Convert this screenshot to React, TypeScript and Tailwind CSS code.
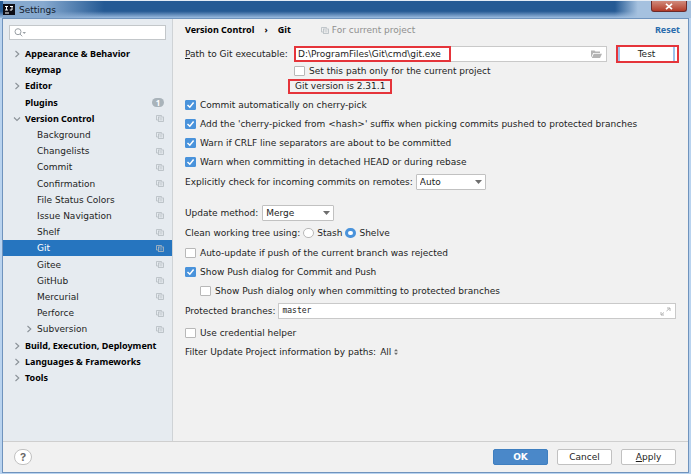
import React from 'react';

interface TreeItem {
  label: string;
  level: 0 | 1;
  arrow?: 'right' | 'down';
  badge?: string;
  copy?: boolean;
  selected?: boolean;
}

const treeItems: TreeItem[] = [
  { label: 'Appearance & Behavior', level: 0, arrow: 'right' },
  { label: 'Keymap', level: 0 },
  { label: 'Editor', level: 0, arrow: 'right' },
  { label: 'Plugins', level: 0, badge: '1' },
  { label: 'Version Control', level: 0, arrow: 'down', copy: true },
  { label: 'Background', level: 1, copy: true },
  { label: 'Changelists', level: 1, copy: true },
  { label: 'Commit', level: 1, copy: true },
  { label: 'Confirmation', level: 1, copy: true },
  { label: 'File Status Colors', level: 1, copy: true },
  { label: 'Issue Navigation', level: 1, copy: true },
  { label: 'Shelf', level: 1, copy: true },
  { label: 'Git', level: 1, copy: true, selected: true },
  { label: 'Gitee', level: 1, copy: true },
  { label: 'GitHub', level: 1, copy: true },
  { label: 'Mercurial', level: 1, copy: true },
  { label: 'Perforce', level: 1, copy: true },
  { label: 'Subversion', level: 1, arrow: 'right', copy: true },
  { label: 'Build, Execution, Deployment', level: 0, arrow: 'right' },
  { label: 'Languages & Frameworks', level: 0, arrow: 'right' },
  { label: 'Tools', level: 0, arrow: 'right' },
];

const CopyIcon = () => (
  <svg className="h-[7px] w-2 shrink-0" viewBox="0 0 8 7" fill="none" stroke="#b4bbc0" strokeWidth="0.8">
    <path d="M2 5H0.5V0.5H5.5V1.5" />
    <rect x="2.5" y="2" width="5" height="4.5" />
    <path d="M4.2 3v2.5M5.8 3v2.5" strokeWidth="0.6" />
  </svg>
);

const Chevron = ({ direction }: { direction: 'right' | 'down' }) => (
  <svg className="h-2 w-2" viewBox="0 0 8 8" fill="none" stroke="#8b9298" strokeWidth="1.1">
    {direction === 'right' ? <path d="M2.5 1L5.8 4L2.5 7" /> : <path d="M1 2.5L4 5.5L7 2.5" />}
  </svg>
);

interface CheckProps {
  label: string;
  checked?: boolean;
  className?: string;
}

const Check: React.FC<CheckProps> = ({ label, checked = false, className = 'h-[19px]' }) => (
  <label className={`flex items-center gap-1 whitespace-nowrap ${className}`}>
    <span className="grid shrink-0">
      <input
        type="checkbox"
        defaultChecked={checked}
        className="peer col-start-1 row-start-1 h-[10px] w-[11px] appearance-none rounded-[1px] border border-[#b8b8b8] bg-white checked:border-[#4a93db] checked:bg-[#4a93db]"
      />
      <svg
        className="pointer-events-none invisible col-start-1 row-start-1 h-[10px] w-[11px] peer-checked:visible"
        viewBox="0 0 11 10"
        fill="none"
        stroke="white"
        strokeWidth="1.5"
      >
        <path d="M2.5 5L4.8 7.2L8.6 2.6" />
      </svg>
    </span>
    {label}
  </label>
);

interface DropdownProps {
  id: string;
  options: string[];
  width: string;
}

const Dropdown: React.FC<DropdownProps> = ({ id, options, width }) => (
  <span className={`grid items-center ${width}`}>
    <select
      id={id}
      className="col-start-1 row-start-1 h-4 w-full appearance-none rounded-[1px] border border-[#c1c1c1] bg-white pl-[3px] leading-3"
    >
      {options.map((option) => (
        <option key={option}>{option}</option>
      ))}
    </select>
    <svg className="pointer-events-none col-start-1 row-start-1 mr-1 h-1 w-[7px] justify-self-end" viewBox="0 0 7 4">
      <path d="M0 0H7L3.5 4Z" fill="#6e6e6e" />
    </svg>
  </span>
);

const Radio = ({ label, checked = false }: { label: string; checked?: boolean }) => (
  <label className="flex items-center gap-[3px]">
    <input
      type="radio"
      name="clean"
      defaultChecked={checked}
      className="h-[10px] w-[11px] appearance-none rounded-full border border-[#b8b8b8] bg-white checked:border-[3px] checked:border-[#4a93db]"
    />
    {label}
  </label>
);

const TitleBar = () => (
  <header className="flex h-[18px] items-center justify-between border-t border-[#e4ecf5] bg-linear-to-b from-[#255a94] from-60% to-[#9dbde0] pl-[3px]">
    <div className="flex h-full items-center gap-1 bg-linear-to-r from-[#86a9cf] from-40% to-transparent pr-12">
      <svg className="h-[11px] w-3" viewBox="0 0 12 11">
        <rect width="12" height="11" fill="#0c0c14" />
        <path d="M2 2.5h3M3.5 2.5v3.5M2 6h3M7 2.5h3M9 2.5V6H6.8M2 9h4" stroke="white" fill="none" />
      </svg>
      <h1 className="text-[#14202c]">Settings</h1>
    </div>
    <div className="flex h-full items-start bg-linear-to-r from-transparent to-[#a5c1df] to-30% pr-1 pl-9">
      <button
        aria-label="Close"
        className="flex h-[11px] w-9 items-center justify-center rounded-b-[3px] border border-t-0 border-[#6b2a2a] bg-linear-to-b from-[#d08a7c] to-[#b23a28]"
      >
        <svg className="h-[7px] w-2" viewBox="0 0 8 7" fill="none" stroke="white" strokeWidth="1.7">
          <path d="M1 0.8L7 6.2M7 0.8L1 6.2" />
        </svg>
      </button>
    </div>
  </header>
);

const Sidebar = () => (
  <aside className="flex w-[170px] shrink-0 flex-col border-r border-[#cfd3d6] bg-[#e6ebf0] pb-[55px]">
    <div className="m-[6px] flex h-[15px] items-center border border-[#c3c7ca] bg-white pl-1">
      <svg className="h-[9px] w-3 shrink-0" viewBox="0 0 12 9" fill="none" stroke="#9aa0a5">
        <circle cx="4" cy="3.7" r="3" />
        <path d="M6 6L8.2 8.3" />
        <path d="M8.5 4h3.5l-1.75 2z" fill="#9aa0a5" stroke="none" />
      </svg>
      <input type="text" aria-label="Search settings" className="w-full min-w-0 bg-transparent outline-none" />
    </div>
    <ul className="grid flex-1 auto-rows-fr">
      {treeItems.map((item) => (
        <li
          key={item.label}
          className={`flex items-center pr-2 ${item.selected ? 'bg-[#2675bf] text-white' : ''} ${
            item.level === 0 ? "pl-[10px] font-['Noto_Sans',sans-serif] font-bold text-black" : 'pl-[22px]'
          }`}
        >
          <span className="w-3 shrink-0">{item.arrow && <Chevron direction={item.arrow} />}</span>
          <span className="flex-1 whitespace-nowrap">{item.label}</span>
          {item.badge && (
            <span className="flex h-[9px] w-3 items-center justify-center rounded-full bg-[#a9b3ba] text-[8px] text-white">
              {item.badge}
            </span>
          )}
          {item.copy && <CopyIcon />}
        </li>
      ))}
    </ul>
  </aside>
);

const GitSettings = () => (
  <main className="flex min-w-0 flex-1 flex-col pr-2 pl-3">
    <div className="mt-px flex h-5 items-center">
      <nav className="flex items-center font-['Noto_Sans',sans-serif] font-bold text-black">
        <span>Version Control</span>
        <span className="px-[10px]">›</span>
        <span>Git</span>
      </nav>
      <span className="ml-[30px] flex items-center gap-[3px] text-[#8f8f8f]">
        <CopyIcon />
        For current project
      </span>
      <a href="#reset" className="ml-auto font-['Noto_Sans',sans-serif] font-bold text-[#2a6cad]">
        Reset
      </a>
    </div>

    <div className="mt-[5px] flex h-[18px] items-center">
      <label htmlFor="git-path" className="w-[109px] shrink-0 whitespace-nowrap">
        <u>P</u>ath to Git executable:
      </label>
      <div className="relative flex h-[16px] flex-1 items-center border border-[#c9c9c9] bg-white pr-1">
        <input
          id="git-path"
          type="text"
          defaultValue="D:\ProgramFiles\Git\cmd\git.exe"
          className="min-w-0 flex-1 bg-transparent pl-[3px] outline-none"
        />
        <svg className="h-2 w-[11px]" viewBox="0 0 11 8" fill="#b4b4b4">
          <path d="M0 7V0.5H3.5L4.5 1.5H9V3H2.2L0.4 7Z" />
          <path d="M2.8 3.8H11L9 8H0.8Z" />
        </svg>
        <span className="pointer-events-none absolute -inset-y-px -left-px w-[157px] border-2 border-[#e5343a]" />
      </div>
      <button className="mr-px ml-[9px] h-[18px] w-[63px] border-2 border-[#e5343a] bg-white p-0">
        <span className="mr-[2px] flex h-full items-center justify-center border-x-2 border-[#9cc3ec]">Test</span>
      </button>
    </div>

    <div className="pl-[109px]">
      <Check label="Set this path only for the current project" className="h-4" />
    </div>
    <div className="flex pl-[103px]">
      <span className="h-[15px] w-[104px] border-2 border-[#e5343a] pl-[5px] leading-[11px] whitespace-nowrap">
        Git version is 2.31.1
      </span>
    </div>

    <div className="mt-px">
      <Check label="Commit automatically on cherry-pick" checked />
      <Check label="Add the 'cherry-picked from <hash>' suffix when picking commits pushed to protected branches" checked />
      <Check label="Warn if CRLF line separators are about to be committed" checked />
      <Check label="Warn when committing in detached HEAD or during rebase" checked />
    </div>

    <div className="mt-px flex h-5 items-center gap-[3px]">
      <label htmlFor="incoming">Explicitly check for incoming commits on remotes:</label>
      <Dropdown id="incoming" options={['Auto', 'Always', 'Never']} width="w-[70px]" />
    </div>
    <div className="mt-[11px] flex h-5 items-center gap-1">
      <label htmlFor="update">Update method:</label>
      <Dropdown id="update" options={['Merge', 'Rebase']} width="w-[72px]" />
    </div>
    <div className="flex h-5 items-center gap-[3px]">
      <span>Clean working tree using:</span>
      <Radio label="Stash" />
      <Radio label="Shelve" checked />
    </div>
    <Check label="Auto-update if push of the current branch was rejected" />
    <Check label="Show Push dialog for Commit and Push" checked />
    <div className="pl-[15px]">
      <Check label="Show Push dialog only when committing to protected branches" />
    </div>

    <div className="mt-px flex h-5 items-center gap-[3px] pr-1">
      <label htmlFor="branches">Protected branches:</label>
      <div className="flex h-4 flex-1 items-center border border-[#c9c9c9] bg-white pr-1">
        <input
          id="branches"
          type="text"
          defaultValue="master"
          className="min-w-0 flex-1 bg-transparent pl-[3px] font-['DejaVu_Sans_Mono',monospace] text-[8px] outline-none"
        />
        <svg className="h-[9px] w-[11px]" viewBox="0 0 11 9" fill="none" stroke="#b4b4b4">
          <path d="M7 1h3v3M10 1L6.5 4M4 8H1V5M1 8L4 5.5" />
        </svg>
      </div>
    </div>
    <div className="mt-[2px]">
      <Check label="Use credential helper" />
    </div>
    <div className="flex h-[19px] items-center gap-1">
      <span>Filter Update Project information by paths:</span>
      <button className="flex items-center gap-[3px]">
        All
        <svg className="h-[6px] w-1" viewBox="0 0 4 6" fill="#6e6e6e">
          <path d="M2 0L4 2.3H0ZM2 6L0 3.7H4Z" />
        </svg>
      </button>
    </div>
  </main>
);

const Footer = () => (
  <footer className="flex h-[31px] shrink-0 items-center border-t border-[#cfcfcf] pr-3 pl-[11px]">
    <button
      aria-label="Help"
      className="h-4 w-[18px] rounded-full border border-[#c1c1c1] bg-white font-[Inter,sans-serif] text-[11px] leading-3 font-bold text-[#6a6a6a]"
    >
      ?
    </button>
    <div className="ml-auto flex gap-[9px]">
      <button className="h-4 w-[55px] rounded-[2px] border border-[#3f7fc0] bg-[#4a88c9] leading-3 font-bold text-white">OK</button>
      <button className="h-4 w-[55px] rounded-[2px] border border-[#c1c1c1] bg-white leading-3">Cancel</button>
      <button className="h-4 w-[55px] rounded-[2px] border border-[#c1c1c1] bg-white leading-3">
        <u>A</u>pply
      </button>
    </div>
  </footer>
);

export default function App() {
  return (
    <div className="flex min-h-screen bg-white pr-[3px] font-['DejaVu_Sans',sans-serif] text-[9px] leading-3 text-[#1d1d1d]">
      <div className="flex min-w-0 flex-1 flex-col bg-[#b9d3ef]">
        <TitleBar />
        <div className="mx-[2px] mb-[1px] flex flex-1 flex-col border border-[#6f93bd] bg-[#f1f1f1]">
          <div className="flex flex-1">
            <Sidebar />
            <GitSettings />
          </div>
          <Footer />
        </div>
      </div>
    </div>
  );
}
